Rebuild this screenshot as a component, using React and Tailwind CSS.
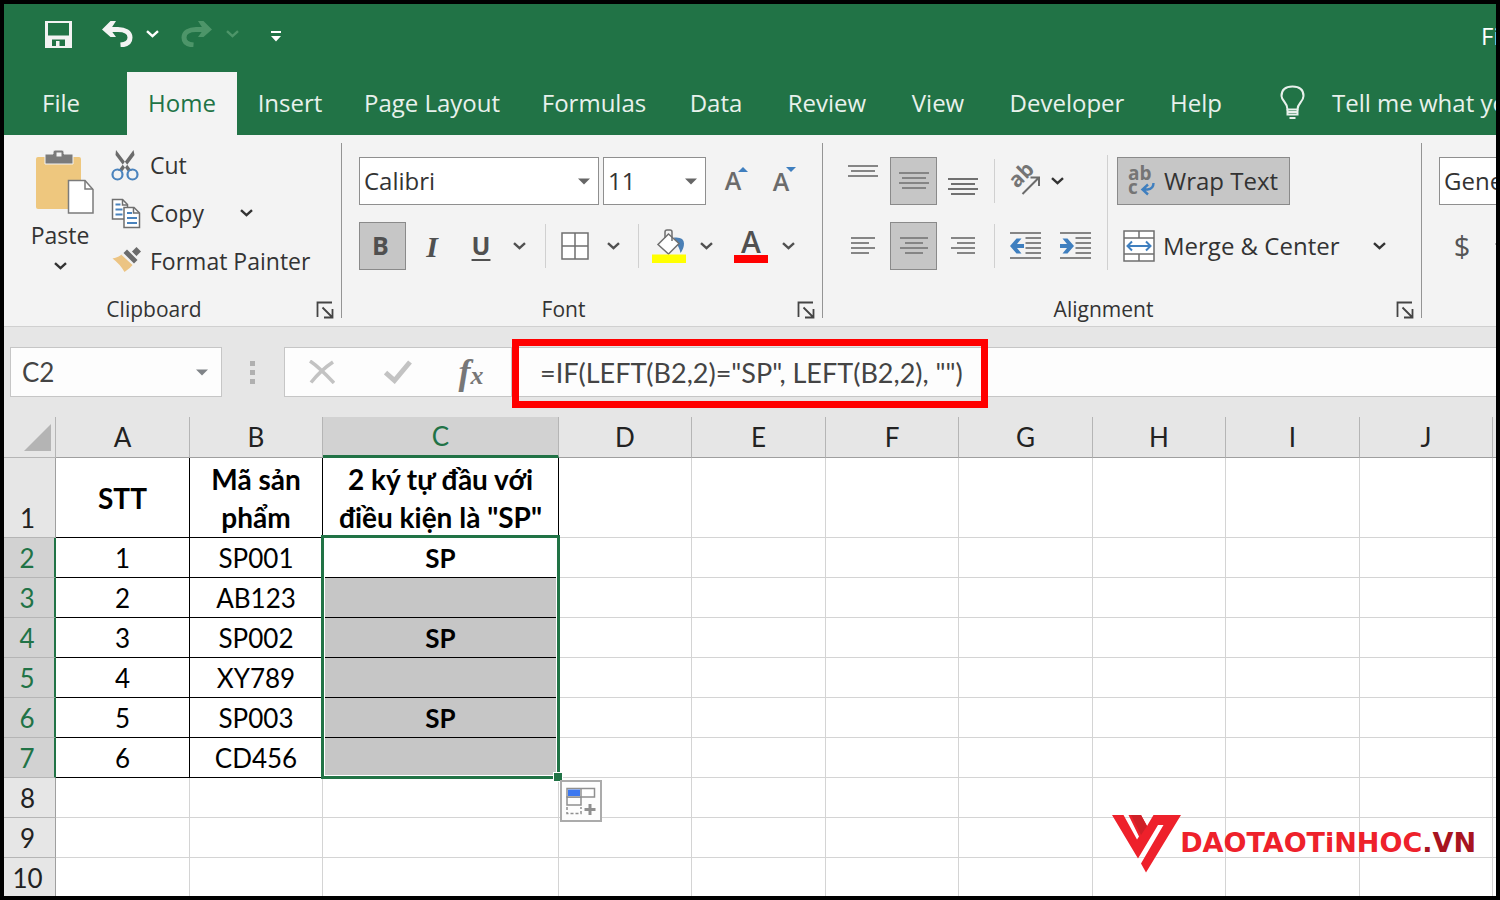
import React, { useState } from 'react';

const TABS = [
  { name: 'File', width: 'w-[114px] mr-[9px]' },
  { name: 'Home', width: 'w-[110px]' },
  { name: 'Insert', width: 'w-[106px]' },
  { name: 'Page Layout', width: 'w-[178px]' },
  { name: 'Formulas', width: 'w-[146px]' },
  { name: 'Data', width: 'w-[98px]' },
  { name: 'Review', width: 'w-[124px]' },
  { name: 'View', width: 'w-[98px]' },
  { name: 'Developer', width: 'w-[160px]' },
  { name: 'Help', width: 'w-[98px]' },
];

const COLUMNS = [
  { name: 'A', width: 'w-[134px]' },
  { name: 'B', width: 'w-[133px]' },
  { name: 'C', width: 'w-[236px]' },
  { name: 'D', width: 'w-[133px]' },
  { name: 'E', width: 'w-[134px]' },
  { name: 'F', width: 'w-[133px]' },
  { name: 'G', width: 'w-[134px]' },
  { name: 'H', width: 'w-[133px]' },
  { name: 'I', width: 'w-[134px]' },
  { name: 'J', width: 'w-[133px]' },
];

const ROWS = [
  ['STT', 'Mã sản phẩm', '2 ký tự đầu với điều kiện là "SP"'],
  ['1', 'SP001', 'SP'],
  ['2', 'AB123', ''],
  ['3', 'SP002', 'SP'],
  ['4', 'XY789', ''],
  ['5', 'SP003', 'SP'],
  ['6', 'CD456', ''],
  [],
  [],
  [],
];

const Chevron = ({ className = '' }) => (
  <svg width="13" height="8" viewBox="0 0 13 8" fill="none" stroke="currentColor" strokeWidth="2.4" className={className}>
    <path d="M1 1.2 6.5 6.2 12 1.2" />
  </svg>
);

const Triangle = ({ className = '' }) => (
  <svg width="12" height="7" viewBox="0 0 12 7" fill="currentColor" className={className}>
    <path d="M0 .5h12L6 6.5z" />
  </svg>
);

const MenuButton = ({ label, className }) => (
  <button aria-label={label} className={`flex h-12 items-center justify-center ${className}`}>
    <Chevron />
  </button>
);

const Separator = ({ className }) => <div className={`h-11 w-px bg-[#d0d0d0] ${className}`} />;

// Horizontal text lines: each entry is [x, y, width]
const Lines = ({ width, height, lines, stroke = '#858585' }) => (
  <svg width={width} height={height} viewBox={`0 0 ${width} ${height}`} stroke={stroke} strokeWidth="2">
    {lines.map(([x, y, w]) => (
      <path key={y} d={`M${x} ${y}h${w}`} />
    ))}
  </svg>
);

const SaveIcon = () => (
  <svg width="27" height="27" viewBox="0 0 27 27">
    <path fill="#f3f3f3" fillRule="evenodd" d="M0 0h27v27H0zM3 2h21v12.500H3zM7 18.500v6.500h4v-5h3.500v5H20v-6.500z" />
  </svg>
);

const UndoIcon = ({ className = '' }) => (
  <svg width="31" height="26" viewBox="0 0 31 26" className={className}>
    <path d="M3 8.500h13c7 0 12 3 12 8 0 4.500-3.500 7-9.500 7.500" fill="none" stroke="currentColor" strokeWidth="5" />
    <path d="M0 8.500 8.500 0H14L8.500 8.500l5.500 7.500H8.500z" fill="currentColor" />
  </svg>
);

const PasteIcon = () => (
  <svg width="68" height="66" viewBox="0 0 68 66">
    <path d="M12 8h41q2 0 2 2v22H42v28H12q-2 0-2-2V10q0-2 2-2z" fill="#eec77e" />
    <path d="M19 5h8V3q0-2 2-2h7q2 0 2 2v2h9v10H19z" fill="#7b7b7b" stroke="#f3f3f3" strokeWidth="1" />
    <path d="M30.500 3.500h5v4h-5z" fill="#f3f3f3" />
    <path d="M42.500 31.500H59l8 9V64H42.500z" fill="#fff" stroke="#7b7b7b" strokeWidth="1.500" />
    <path d="M59 31.500V40h8" fill="none" stroke="#7b7b7b" strokeWidth="1.500" />
  </svg>
);

const CutIcon = () => (
  <svg width="30" height="32" viewBox="0 0 30 32" fill="none">
    <path d="M5 1 21 22h-4.500L4.500 6zM22.500 1 7 22h4.500L23.500 6z" fill="#6b6b6b" />
    <circle cx="6.500" cy="25.500" r="5" stroke="#4a83bd" strokeWidth="2.200" />
    <circle cx="21.500" cy="25.500" r="5" stroke="#4a83bd" strokeWidth="2.200" />
  </svg>
);

const CopyIcon = () => (
  <svg width="30" height="32" viewBox="0 0 30 32" stroke="#6f6f6f" strokeWidth="1.500">
    <path d="M1.500 2.500h10l5 5V22h-15z" fill="#fff" />
    <path d="M11.500 2.500V8h5" fill="none" />
    <path d="M4.500 7.500h5M4.500 12.500h7M4.500 17.500h7" stroke="#4a83bd" strokeWidth="1.800" />
    <path d="M13 10.500h10l5.500 5.500v14.500H13z" fill="#fff" />
    <path d="M22.500 10.500V16h6" fill="none" />
    <path d="M16 16h5M16 21h10M16 26h10" stroke="#4a83bd" strokeWidth="1.800" />
  </svg>
);

const PainterIcon = () => (
  <svg width="30" height="32" viewBox="0 0 30 32">
    <path d="M1.500 13.500Q8 12 11 9L22 19.500q-3 4-8.500 7.500Q9 19 1.500 13.500z" fill="#ecc483" />
    <path d="M12.500 8 16 4.500 26.500 15 23 18.500z" fill="#6b6b6b" />
    <path d="M20.500 7 25.500 2l4.500 4.500-5 5z" fill="#6b6b6b" />
    <path d="m10.500 9 12 11M19.500 6l6 6" stroke="#f3f3f3" strokeWidth="1.200" />
  </svg>
);

const BordersIcon = () => (
  <svg width="28" height="28" viewBox="0 0 28 28">
    <path d="M1 1h26v26H1zM14 1v26M1 14h26" fill="#fff" stroke="#6f6f6f" strokeWidth="1.500" />
  </svg>
);

const FillIcon = () => (
  <svg width="34" height="34" viewBox="0 0 34 34">
    <path d="M22 8.500q10-1 10 6 0 5-3.500 9.500-1-6-5.500-11z" fill="#4a7fb5" />
    <path d="M16.500 5 27 14.500 16.500 25 6 15.500z" fill="#fff" stroke="#6f6f6f" strokeWidth="1.500" />
    <path d="M13 9V3q0-2 2-2h3q2 0 2 2v9" fill="none" stroke="#6f6f6f" strokeWidth="1.500" />
    <path d="M0 25.500h34V34H0z" fill="#ff0" />
  </svg>
);

const OrientationIcon = () => (
  <svg width="34" height="30" viewBox="0 0 34 30" className="overflow-visible">
    <text x="0" y="0" transform="translate(9 23) rotate(-45)" fontSize="21" fontWeight="700" fill="#757575">ab</text>
    <path d="m14.500 28 16-16M22.500 11.500H31V20" fill="none" stroke="#6b6b6b" strokeWidth="2" />
  </svg>
);

const IndentIcon = ({ increase }) => (
  <svg width="31" height="28" viewBox="0 0 31 28">
    <path d="M0 1h31M15.500 6h15.500M15.500 11h15.500M15.500 16h15.500M15.500 21h15.500M0 26h31" stroke="#858585" strokeWidth="2" />
    <path
      d={increase ? 'M7.500 6.500h-5L7 12H0v4h7l-4.500 5.500h5L14 14z' : 'M6.500 6.500h5L7 12h7v4H7l4.500 5.500h-5L0 14z'}
      fill="#3f7fbf"
    />
  </svg>
);

const WrapIcon = () => (
  <svg width="28" height="32" viewBox="0 0 28 32" className="overflow-visible">
    <text x="0" y="15" fontSize="19" fontWeight="700" fill="#757575">ab</text>
    <text x="0" y="29" fontSize="19" fontWeight="700" fill="#757575">c</text>
    <path d="M25.500 18q0 6-6 6.500h-4M20 19.500 14.500 24.500l5.500 5" fill="none" stroke="#3f7fbf" strokeWidth="2.400" />
  </svg>
);

const MergeIcon = () => (
  <svg width="32" height="32" viewBox="0 0 32 32" fill="none" stroke="#6f6f6f" strokeWidth="1.500">
    <path d="M1 1h30v30H1zM1 8h30M1 24h30M16 1v7M16 24v7" fill="#fff" />
    <path d="M5 16h22M9 11.500 4.500 16 9 20.500M23 11.500l4.500 4.500-4.500 4.500" stroke="#3f7fbf" strokeWidth="2" />
  </svg>
);

const LauncherIcon = () => (
  <svg width="18" height="18" viewBox="0 0 18 18" fill="none" stroke="#444" strokeWidth="1.800">
    <path d="M1.500 16V1.500H16M6.500 6.500l9 9M16.500 8v8.500H8" />
  </svg>
);

const BulbIcon = () => (
  <svg width="25" height="35" viewBox="0 0 25 35" fill="none" stroke="#e8f1ec" strokeWidth="2">
    <path d="M7.500 24.500q0-4-3-7.500-3-3.500-3-6Q1.500 1.500 12.500 1.500T23.500 11q0 3-3 6.500-3 3.500-3 7z" />
    <path d="M7.500 24v5.500h10V24M7.500 27h10M9.500 33h6" />
  </svg>
);

const FillOptionsIcon = () => (
  <svg width="30" height="28" viewBox="0 0 30 28" fill="none" stroke="#8f8f8f" strokeWidth="1.500">
    <path d="M1 10h14v8H1z" />
    <path d="M1 1.500h27.500V10H1z" fill="#fff" />
    <path d="M2 2.500h12v6.500H2z" fill="#3c78f0" stroke="none" />
    <path d="M15 1.500V10" />
    <path d="M1 20v6.500h14V20" strokeDasharray="3 2" />
    <path d="M24 17v11M18.500 22.500h11" strokeWidth="3" />
  </svg>
);

const LogoMark = () => (
  <svg width="69" height="58" viewBox="0 0 69 58">
    <path d="M0 0h11.500L25 24.500l2-3L16.500 0H29l6 11 6.500-11H69L34 57.500 29 48.500 51.500 10H46L26 43.500z" fill="#ee212b" />
    <path d="M19 0h10l6 11-6 9z" fill="#cf2027" />
  </svg>
);

const Group = ({ label, className = '', children }) => (
  <>
    <section className={`flex shrink-0 flex-col ${className}`}>
      <div className="flex flex-1">{children}</div>
      <div className="flex h-6 items-center text-[21px]">
        <span className="flex-1 text-center">{label}</span>
        <button aria-label={`${label} settings`} className="pr-[7px] pl-3">
          <LauncherIcon />
        </button>
      </div>
    </section>
    <div className="mt-0.5 mb-1 w-px shrink-0 bg-[#949494]" />
  </>
);

const TitleBar = () => (
  <div className="flex h-[68px] items-center pl-[41px] text-white">
    <button aria-label="Save" className="-mt-2"><SaveIcon /></button>
    <button aria-label="Undo" className="-mt-2 ml-[30px] text-[#f3f3f3]"><UndoIcon /></button>
    <button aria-label="Undo history" className="-mt-2 ml-[13px]"><Chevron /></button>
    <button aria-label="Redo" className="-mt-2 ml-[22px] text-[#4d9569]"><UndoIcon className="-scale-x-100" /></button>
    <button aria-label="Redo history" className="-mt-2 ml-[14px] text-[#4d9569]"><Chevron /></button>
    <button aria-label="Customize toolbar" className="-mt-1 ml-8">
      <svg width="10" height="11" viewBox="0 0 10 11" fill="#fff">
        <path d="M0 0h10v2H0zM0 5h10l-5 5.500z" />
      </svg>
    </button>
    <span className="-mt-1 ml-auto w-[15px] overflow-hidden text-[24px] whitespace-nowrap">Fi</span>
  </div>
);

const Tabs = () => {
  const [active, setActive] = useState('Home');
  return (
    <nav className="flex h-[63px] overflow-hidden text-[24px] text-[#e8f1ec]">
      {TABS.map((tab) => (
        <button
          key={tab.name}
          onClick={() => setActive(tab.name)}
          className={`shrink-0 pb-0.5 whitespace-nowrap ${tab.width} ${active === tab.name ? 'bg-[#f3f3f3] text-[#217346]' : ''}`}
        >
          {tab.name}
        </button>
      ))}
      <button className="ml-[35px] flex shrink-0 items-center gap-[27px] pb-0.5 whitespace-nowrap">
        <BulbIcon />
        Tell me what you want to do
      </button>
    </nav>
  );
};

const Select = ({ label, options, className }) => (
  <div className={`relative h-12 shrink-0 ${className}`}>
    <select aria-label={label} className="h-full w-full appearance-none border border-[#8f8f8f] bg-white pl-1 text-[24px]">
      {options.map((option) => (
        <option key={option}>{option}</option>
      ))}
    </select>
    <Triangle className="pointer-events-none absolute top-[21px] right-[9px] text-[#666]" />
  </div>
);

const ClipboardGroup = () => (
  <Group label="Clipboard" className="w-[337px]">
    <button className="ml-2 flex w-24 flex-col items-center pt-2 text-[23px] leading-8">
      <PasteIcon />
      <span className="mt-1">Paste</span>
      <Chevron className="mt-[11px]" />
    </button>
    <div className="ml-[3px] flex flex-col text-[23px]">
      <button className="flex h-12 items-center gap-[9px]"><CutIcon /> Cut</button>
      <div className="flex h-12 items-center">
        <button className="flex w-[119px] items-center gap-[9px]"><CopyIcon /> Copy</button>
        <MenuButton label="Copy options" className="w-8" />
      </div>
      <button className="flex h-12 items-center gap-[9px] whitespace-nowrap"><PainterIcon /> Format Painter</button>
    </div>
  </Group>
);

const FontGroup = () => (
  <Group label="Font" className="w-[480px]">
    <div className="flex flex-col gap-[17px] pt-4 pl-[17px]">
      <div className="flex">
        <Select label="Font name" options={['Calibri', 'Arial']} className="w-60" />
        <Select label="Font size" options={['11', '12']} className="ml-1 w-[103px]" />
        <button aria-label="Increase font size" className="relative ml-[6px] w-12 pr-1.5 text-[25px] font-semibold text-[#6b6b6b]">
          A
          <svg width="10" height="5" viewBox="0 0 10 5" className="absolute top-2.5 right-3"><path d="M0 5h10L5 0z" fill="#3f7fbf" /></svg>
        </button>
        <button aria-label="Decrease font size" className="relative w-12 pt-0.5 pr-1.5 text-[25px] font-semibold text-[#6b6b6b]">
          A
          <svg width="10" height="5" viewBox="0 0 10 5" className="absolute top-2.5 right-3"><path d="M0 0h10L5 5z" fill="#3f7fbf" /></svg>
        </button>
      </div>
      <div className="flex items-center text-[25px] font-bold text-[#505050]">
        <button className="h-12 w-[47px] border border-[#8a8a8a] bg-[#c6c6c6] pr-1">B</button>
        <button className="h-12 w-[52px] font-['Liberation_Serif'] text-[30px] italic">I</button>
        <button className="h-12 w-[46px] underline decoration-2 underline-offset-4">U</button>
        <MenuButton label="Underline styles" className="w-[30px]" />
        <Separator className="ml-[11px]" />
        <button aria-label="Borders" className="ml-[7px] flex w-11 justify-center"><BordersIcon /></button>
        <MenuButton label="Border styles" className="w-8" />
        <Separator className="ml-[9px]" />
        <button aria-label="Fill color" className="ml-[5px] flex w-[50px] justify-center"><FillIcon /></button>
        <MenuButton label="Fill colors" className="w-6" />
        <button className="ml-[6px] flex w-[54px] flex-col items-center text-[30px] leading-[26px] font-semibold">
          A
          <span className="h-2 w-[34px] bg-[#f00]" />
        </button>
        <MenuButton label="Font colors" className="w-5" />
      </div>
    </div>
  </Group>
);

const AlignmentGroup = () => (
  <Group label="Alignment" className="w-[598px]">
    <div className="flex w-[284px] flex-col gap-[17px] pt-4 pl-[15px]">
      <div className="flex items-center">
        <button aria-label="Top align" className="flex w-[50px] justify-center pb-3">
          <Lines width={30} height={22} lines={[[0, 2, 30], [3, 7, 24], [0, 12, 30]]} />
        </button>
        <button aria-label="Middle align" className="ml-0.5 flex h-12 w-[47px] items-center justify-center border border-[#8a8a8a] bg-[#c6c6c6]">
          <Lines width={30} height={18} lines={[[0, 1, 30], [3, 6, 24], [0, 11, 30], [3, 16, 24]]} />
        </button>
        <button aria-label="Bottom align" className="flex w-[52px] justify-center pt-3">
          <Lines width={30} height={18} lines={[[0, 1, 30], [3, 6, 24], [0, 11, 30], [3, 16, 24]]} stroke="#707070" />
        </button>
        <Separator className="ml-[5px]" />
        <button aria-label="Orientation" className="ml-2 flex w-11 justify-center"><OrientationIcon /></button>
        <MenuButton label="Orientation options" className="w-5" />
      </div>
      <div className="flex items-center">
        <button aria-label="Align left" className="flex w-[50px] justify-center">
          <Lines width={24} height={18} lines={[[0, 1, 24], [0, 6, 18], [0, 11, 24], [0, 16, 18]]} />
        </button>
        <button aria-label="Center" className="ml-0.5 flex h-12 w-[47px] items-center justify-center border border-[#8a8a8a] bg-[#c6c6c6]">
          <Lines width={28} height={18} lines={[[0, 1, 28], [5, 6, 18], [0, 11, 28], [5, 16, 18]]} />
        </button>
        <button aria-label="Align right" className="flex w-[52px] justify-center">
          <Lines width={24} height={18} lines={[[0, 1, 24], [6, 6, 18], [0, 11, 24], [6, 16, 18]]} />
        </button>
        <Separator className="ml-[5px]" />
        <button aria-label="Decrease indent" className="ml-2 flex w-11 justify-center"><IndentIcon /></button>
        <button aria-label="Increase indent" className="ml-[6px] flex w-11 justify-center"><IndentIcon increase /></button>
      </div>
    </div>
    <div className="mt-3.5 mb-7 w-px bg-[#d0d0d0]" />
    <div className="flex flex-col gap-[17px] pt-4 pl-[9px] text-[24px] whitespace-nowrap">
      <button className="flex h-12 w-[173px] items-center gap-2 border border-[#8a8a8a] bg-[#c6c6c6] pl-2.5">
        <WrapIcon /> Wrap Text
      </button>
      <div className="flex h-12 items-center">
        <button className="flex w-[246px] items-center gap-2 pl-[6px]">
          <MergeIcon /> Merge &amp; Center
        </button>
        <MenuButton label="Merge options" className="w-8" />
      </div>
    </div>
  </Group>
);

const NumberGroup = () => (
  <section className="flex shrink-0 flex-col gap-[17px] pt-4 pl-[17px]">
    <Select label="Number format" options={['General', 'Number']} className="w-60" />
    <div className="flex">
      <button className="w-[46px] text-[29px] text-[#555]">$</button>
      <MenuButton label="Accounting formats" className="w-8" />
    </div>
  </section>
);

const FormulaBar = () => (
  <div className="flex border-t border-[#d0d0d0] pt-5 pb-5 pl-[6px] text-[#444]">
    <div className="relative h-[50px] w-[212px] shrink-0">
      <input aria-label="Name box" defaultValue="C2" className="h-full w-full border border-[#c6c6c6] bg-[#fdfdfd] pl-[11px] font-['Lato',sans-serif] text-[26px]" />
      <Triangle className="pointer-events-none absolute top-[22px] right-3.5 text-[#808488]" />
    </div>
    <div className="ml-7 flex shrink-0 flex-col justify-center gap-1">
      <span className="size-[5px] bg-[#b0b0b0]" />
      <span className="size-[5px] bg-[#b0b0b0]" />
      <span className="size-[5px] bg-[#b0b0b0]" />
    </div>
    <div className="ml-[29px] flex h-[50px] w-[228px] shrink-0 items-center border border-[#c6c6c6] bg-[#fdfdfd]">
      <button aria-label="Cancel" className="flex w-[74px] justify-center">
        <svg width="26" height="24" viewBox="0 0 26 24" stroke="#c3c3c3" strokeWidth="3.500" fill="none">
          <path d="M1 1q9 6 24 22M24 2Q12 10 2 22.500" />
        </svg>
      </button>
      <button aria-label="Enter" className="flex w-[78px] justify-center">
        <svg width="28" height="24" viewBox="0 0 28 24" stroke="#c3c3c3" strokeWidth="5" fill="none">
          <path d="M1.500 12.500 10.500 20.500 26 2" />
        </svg>
      </button>
      <button className="w-[68px] font-['Liberation_Serif'] text-[36px] leading-none font-bold text-[#777] italic">
        f<span className="text-[26px]">x</span>
      </button>
    </div>
    <div className="relative flex-1">
      <input
        aria-label="Formula"
        defaultValue={'=IF(LEFT(B2,2)="SP", LEFT(B2,2), "")'}
        className="h-full w-full border-y border-[#c6c6c6] bg-[#fdfdfd] pl-[28px] font-['Lato',sans-serif] text-[27px]"
      />
      <div className="pointer-events-none absolute -top-2 -bottom-[11px] left-0 w-[476px] border-[7px] border-[#f00]" />
    </div>
  </div>
);

const Selection = () => (
  <div className="absolute -top-[3px] -left-0.5 z-10 h-[244px] w-[239px] border-[3px] border-[#217346] shadow-[inset_0_0_0_1px_#fff]">
    <span className="absolute -right-[6px] -bottom-[6px] size-[10px] border border-white bg-[#217346]" />
    <button aria-label="Auto fill options" className="absolute top-[242px] left-[236px] flex size-[42px] items-center justify-center border-2 border-[#ababab] bg-[#fdfdfd]">
      <FillOptionsIcon />
    </button>
  </div>
);

const Cell = ({ row, col, value }) => {
  const inTable = row < 7 && col < 3;
  const shaded = col === 2 && row > 1 && row < 7;
  const text = row === 0 ? 'text-[28px] font-bold' : col === 2 ? 'font-bold' : '';
  return (
    <td
      className={`relative border-r border-b px-2 pt-px pb-0 text-center leading-[38px] ${inTable ? 'border-black' : 'border-[#d4d4d4]'} ${text} ${shaded ? 'bg-[#c6c6c6]' : 'bg-white'}`}
    >
      {value}
      {row === 1 && col === 2 && <Selection />}
    </td>
  );
};

const Sheet = () => (
  <table className="w-full table-fixed border-separate border-spacing-0 font-['Lato',sans-serif] text-[26px] text-black">
    <thead>
      <tr className="h-[41px] text-[#222]">
        <th className="w-[52px] border-r border-b border-[#b5b5b5] p-0">
          <svg width="27" height="27" viewBox="0 0 27 27" className="mr-1 ml-auto"><path d="M27 0v27H0z" fill="#b4b4b4" /></svg>
        </th>
        {COLUMNS.map(({ name, width }) => (
          <th
            key={name}
            className={`p-0 leading-9 font-normal ${width} ${name === 'C' ? 'border-r border-b-[3px] border-r-[#b5b5b5] border-b-[#217346] bg-[#d2d2d2] text-[#217346]' : 'border-r border-b border-r-[#b5b5b5] border-b-[#9f9f9f]'}`}
          >
            {name}
          </th>
        ))}
        <th className="border-b border-[#9f9f9f] p-0" />
      </tr>
    </thead>
    <tbody>
      {ROWS.map((values, row) => (
        <tr key={row} className={row === 0 ? 'h-20' : 'h-10'}>
          <th
            className={`border-b border-b-[#b5b5b5] p-0 pr-1 align-bottom leading-[38px] font-normal ${row > 0 && row < 7 ? 'border-r-2 border-r-[#217346] bg-[#d2d2d2] text-[#217346]' : 'border-r border-r-[#9f9f9f] text-[#222]'}`}
          >
            {row + 1}
          </th>
          {COLUMNS.map(({ name }, col) => (
            <Cell key={name} row={row} col={col} value={values[col]} />
          ))}
          <td className="border-b border-[#d4d4d4] bg-white p-0" />
        </tr>
      ))}
    </tbody>
  </table>
);

const Logo = () => (
  <a href="#" aria-label="DAOTAOTiNHOC.VN" className="absolute right-5 bottom-[23px] z-20 flex items-center">
    <LogoMark />
    <span className="-mt-1 -ml-px font-['DejaVu_Sans'] text-[27px] leading-none font-bold text-[#ee212b]">
      DAOTAOTiNHOC<span className="text-[#a81420]">.VN</span>
    </span>
  </a>
);

function App() {
  return (
    <div className="h-screen overflow-hidden bg-black p-1 font-['Open_Sans',sans-serif] text-[#333]">
      <div className="relative h-full overflow-hidden bg-[#e6e6e6]">
        <header className="bg-[#217346]">
          <TitleBar />
          <Tabs />
        </header>
        <div className="flex h-[191px] overflow-hidden bg-[#f3f3f3] pt-[6px] pb-1">
          <ClipboardGroup />
          <FontGroup />
          <AlignmentGroup />
          <NumberGroup />
        </div>
        <FormulaBar />
        <Sheet />
        <Logo />
      </div>
    </div>
  );
}

export default App;
